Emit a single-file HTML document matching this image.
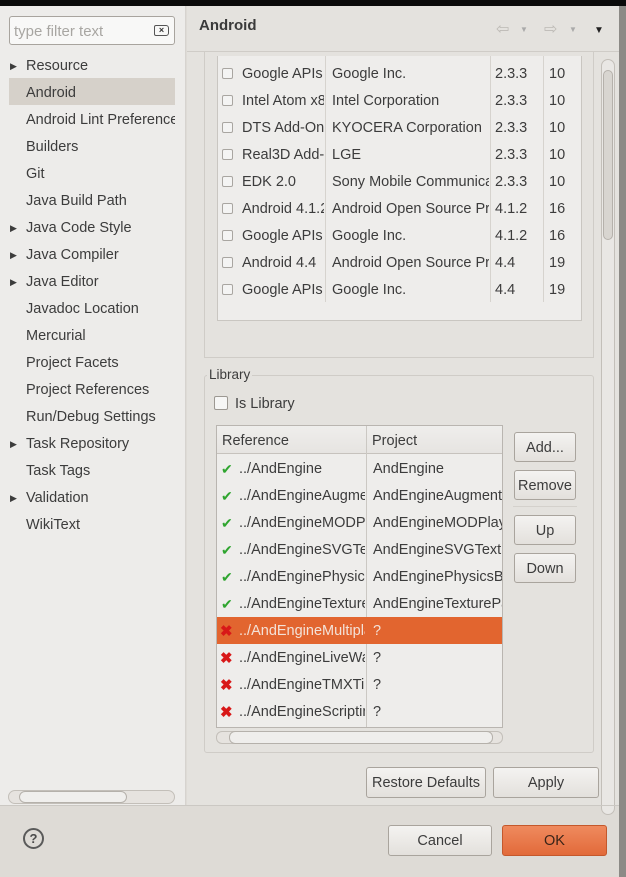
<!DOCTYPE html>
<html><head><style>
*{box-sizing:border-box;margin:0;padding:0}
body{width:626px;height:877px;position:relative;overflow:hidden;background:#dedbd6;font-family:"Liberation Sans",sans-serif;font-size:14.5px;color:#3c3c3c}
.a{position:absolute}
.t{position:absolute;white-space:nowrap;overflow:hidden}
.btn{position:absolute;border:1px solid #a9a49d;border-radius:3px;background:linear-gradient(#f4f3f1,#e3e0dc);text-align:center;font-size:14.5px;color:#3c3c3c}
.cb{position:absolute;width:11px;height:11px;border:1px solid #a9a6a1;border-radius:2px;background:#f4f4f3}
</style></head><body>
<div class="a" style="left:0;top:0;width:626px;height:6px;background:#0a0a0a"></div>
<div class="a" style="left:619px;top:6px;width:7px;height:871px;background:#8c8a86"></div>
<!-- left pane -->
<div class="a" style="left:0;top:6px;width:186px;height:799px;background:#edecea;border-right:1px solid #d6d3cf"></div>
<div class="a" style="left:9px;top:16px;width:166px;height:29px;border:1px solid #a8a49e;border-radius:3px;background:#f8f8f7"></div>
<div class="t" style="left:14px;top:23px;color:#a8a6a2;font-size:15px">type filter text</div>
<div class="a" style="left:154px;top:25px;width:15px;height:11px;border:1.5px solid #555;border-radius:2px 3px 3px 2px;font-size:9px;line-height:8px;text-align:center;font-weight:bold;color:#333">×</div>
<div class="a" style="left:9px;top:78px;width:166px;height:27px;background:#d6d1ca"></div>
<div class="a" style="left:0;top:53px;font-size:14.5px;line-height:27px">
<div style="position:relative;padding-left:26px">Resource<span class="a" style="left:10px;top:0;font-size:9px">▶</span></div>
<div style="padding-left:26px">Android</div>
<div style="padding-left:26px;width:175px;overflow:hidden;white-space:nowrap">Android Lint Preferences</div>
<div style="padding-left:26px">Builders</div>
<div style="padding-left:26px">Git</div>
<div style="padding-left:26px">Java Build Path</div>
<div style="position:relative;padding-left:26px">Java Code Style<span class="a" style="left:10px;top:0;font-size:9px">▶</span></div>
<div style="position:relative;padding-left:26px">Java Compiler<span class="a" style="left:10px;top:0;font-size:9px">▶</span></div>
<div style="position:relative;padding-left:26px">Java Editor<span class="a" style="left:10px;top:0;font-size:9px">▶</span></div>
<div style="padding-left:26px">Javadoc Location</div>
<div style="padding-left:26px">Mercurial</div>
<div style="padding-left:26px">Project Facets</div>
<div style="padding-left:26px">Project References</div>
<div style="padding-left:26px">Run/Debug Settings</div>
<div style="position:relative;padding-left:26px">Task Repository<span class="a" style="left:10px;top:0;font-size:9px">▶</span></div>
<div style="padding-left:26px">Task Tags</div>
<div style="position:relative;padding-left:26px">Validation<span class="a" style="left:10px;top:0;font-size:9px">▶</span></div>
<div style="padding-left:26px">WikiText</div>
</div>
<div class="a" style="left:8px;top:790px;width:167px;height:14px;border:1px solid #c3bfb9;border-radius:7px;background:#e6e3df"></div>
<div class="a" style="left:19px;top:791px;width:108px;height:12px;border:1px solid #b5b1ab;border-radius:6px;background:#f0efed"></div>
<!-- right pane -->
<div class="a" style="left:187px;top:6px;width:432px;height:799px;background:#e4e2de"></div>
<div class="t" style="left:199px;top:17px;font-weight:bold;font-size:15px;color:#3a3a3a">Android</div>
<div class="t" style="left:496px;top:19px;font-size:16px;color:#bdbab5">⇦</div>
<div class="t" style="left:520px;top:25px;font-size:8px;color:#aaa">▼</div>
<div class="t" style="left:544px;top:19px;font-size:16px;color:#bdbab5">⇨</div>
<div class="t" style="left:569px;top:25px;font-size:8px;color:#aaa">▼</div>
<div class="t" style="left:594px;top:25px;font-size:10px;color:#222">▼</div>
<div class="a" style="left:187px;top:51px;width:432px;height:1px;background:#cfccc7"></div>
<div class="a" style="left:204px;top:52px;width:390px;height:306px;border:1px solid #cfccc7;border-top:none"></div>
<div class="a" style="left:217px;top:56px;width:365px;height:265px;background:#eeedeb;border:1px solid #c9c6c1;border-top:none"></div>
<div class="a" style="left:325px;top:56px;width:1px;height:246px;background:#d6d3ce"></div>
<div class="a" style="left:490px;top:56px;width:1px;height:246px;background:#d6d3ce"></div>
<div class="a" style="left:543px;top:56px;width:1px;height:246px;background:#d6d3ce"></div>
<div class="a" style="left:0;top:61px;font-size:14.5px;line-height:27px">
<div style="position:relative;height:27px"><span class="cb" style="left:222px;top:7px"></span><span class="t" style="left:242px;width:82px">Google APIs</span><span class="t" style="left:332px;width:157px">Google Inc.</span><span class="t" style="left:495px">2.3.3</span><span class="t" style="left:549px">10</span></div>
<div style="position:relative;height:27px"><span class="cb" style="left:222px;top:7px"></span><span class="t" style="left:242px;width:82px">Intel Atom x86</span><span class="t" style="left:332px;width:157px">Intel Corporation</span><span class="t" style="left:495px">2.3.3</span><span class="t" style="left:549px">10</span></div>
<div style="position:relative;height:27px"><span class="cb" style="left:222px;top:7px"></span><span class="t" style="left:242px;width:82px">DTS Add-On</span><span class="t" style="left:332px;width:157px">KYOCERA Corporation</span><span class="t" style="left:495px">2.3.3</span><span class="t" style="left:549px">10</span></div>
<div style="position:relative;height:27px"><span class="cb" style="left:222px;top:7px"></span><span class="t" style="left:242px;width:82px">Real3D Add-On</span><span class="t" style="left:332px;width:157px">LGE</span><span class="t" style="left:495px">2.3.3</span><span class="t" style="left:549px">10</span></div>
<div style="position:relative;height:27px"><span class="cb" style="left:222px;top:7px"></span><span class="t" style="left:242px;width:82px">EDK 2.0</span><span class="t" style="left:332px;width:157px">Sony Mobile Communications</span><span class="t" style="left:495px">2.3.3</span><span class="t" style="left:549px">10</span></div>
<div style="position:relative;height:27px"><span class="cb" style="left:222px;top:7px"></span><span class="t" style="left:242px;width:82px">Android 4.1.2</span><span class="t" style="left:332px;width:157px">Android Open Source Project</span><span class="t" style="left:495px">4.1.2</span><span class="t" style="left:549px">16</span></div>
<div style="position:relative;height:27px"><span class="cb" style="left:222px;top:7px"></span><span class="t" style="left:242px;width:82px">Google APIs</span><span class="t" style="left:332px;width:157px">Google Inc.</span><span class="t" style="left:495px">4.1.2</span><span class="t" style="left:549px">16</span></div>
<div style="position:relative;height:27px"><span class="cb" style="left:222px;top:7px"></span><span class="t" style="left:242px;width:82px">Android 4.4</span><span class="t" style="left:332px;width:157px">Android Open Source Project</span><span class="t" style="left:495px">4.4</span><span class="t" style="left:549px">19</span></div>
<div style="position:relative;height:27px"><span class="cb" style="left:222px;top:7px"></span><span class="t" style="left:242px;width:82px">Google APIs</span><span class="t" style="left:332px;width:157px">Google Inc.</span><span class="t" style="left:495px">4.4</span><span class="t" style="left:549px">19</span></div>
</div>
<!-- vertical scrollbar -->
<div class="a" style="left:601px;top:59px;width:14px;height:756px;border:1px solid #c3bfb9;border-radius:7px;background:#e9e7e4"></div>
<div class="a" style="left:603px;top:70px;width:10px;height:170px;border:1px solid #b5b1ab;border-radius:5px;background:#d8d5d0"></div>
<!-- Library group -->
<div class="a" style="left:204px;top:375px;width:390px;height:378px;border:1px solid #cfccc7;border-radius:3px"></div>
<div class="t" style="left:207px;top:367px;background:#e4e2de;padding:0 2px;font-size:13.5px">Library</div>
<div class="a" style="left:214px;top:396px;width:14px;height:14px;border:1px solid #9c9892;border-radius:2px;background:#f6f6f5"></div>
<div class="t" style="left:235px;top:396px;font-size:14.5px">Is Library</div>
<div class="a" style="left:216px;top:425px;width:287px;height:303px;background:#eeedeb;border:1px solid #b9b5b0"></div>
<div class="a" style="left:217px;top:426px;width:285px;height:28px;background:linear-gradient(#efeeec,#e6e4e1);border-bottom:1px solid #c6c2bd"></div>
<div class="a" style="left:366px;top:426px;width:1px;height:301px;background:#cbc8c3"></div>
<div class="t" style="left:222px;top:433px">Reference</div>
<div class="t" style="left:372px;top:433px">Project</div>
<div class="a" style="left:217px;top:617px;width:285px;height:27px;background:#e2652f"></div>
<div class="a" style="left:0;top:456px;font-size:14.5px;line-height:27px">
<div style="position:relative;height:27px"><span class="t" style="left:221px;color:#2fa52f;font-size:14px">✔</span><span class="t" style="left:239px;width:126px">../AndEngine</span><span class="t" style="left:373px;width:129px">AndEngine</span></div>
<div style="position:relative;height:27px"><span class="t" style="left:221px;color:#2fa52f;font-size:14px">✔</span><span class="t" style="left:239px;width:126px">../AndEngineAugmentedReality</span><span class="t" style="left:373px;width:129px">AndEngineAugmentedReality</span></div>
<div style="position:relative;height:27px"><span class="t" style="left:221px;color:#2fa52f;font-size:14px">✔</span><span class="t" style="left:239px;width:126px">../AndEngineMODPlayer</span><span class="t" style="left:373px;width:129px">AndEngineMODPlayer</span></div>
<div style="position:relative;height:27px"><span class="t" style="left:221px;color:#2fa52f;font-size:14px">✔</span><span class="t" style="left:239px;width:126px">../AndEngineSVGTexture</span><span class="t" style="left:373px;width:129px">AndEngineSVGTexture</span></div>
<div style="position:relative;height:27px"><span class="t" style="left:221px;color:#2fa52f;font-size:14px">✔</span><span class="t" style="left:239px;width:126px">../AndEnginePhysicsBox2D</span><span class="t" style="left:373px;width:129px">AndEnginePhysicsBox2D</span></div>
<div style="position:relative;height:27px"><span class="t" style="left:221px;color:#2fa52f;font-size:14px">✔</span><span class="t" style="left:239px;width:126px">../AndEngineTexturePacker</span><span class="t" style="left:373px;width:129px">AndEngineTexturePacker</span></div>
<div style="position:relative;height:27px;color:#f3e2d8"><span class="t" style="left:220px;color:#d81818;font-weight:bold;font-size:15px">✖</span><span class="t" style="left:239px;width:126px">../AndEngineMultiplayer</span><span class="t" style="left:373px">?</span></div>
<div style="position:relative;height:27px"><span class="t" style="left:220px;color:#d81818;font-weight:bold;font-size:15px">✖</span><span class="t" style="left:239px;width:126px">../AndEngineLiveWallpaper</span><span class="t" style="left:373px">?</span></div>
<div style="position:relative;height:27px"><span class="t" style="left:220px;color:#d81818;font-weight:bold;font-size:15px">✖</span><span class="t" style="left:239px;width:126px">../AndEngineTMXTiledMap</span><span class="t" style="left:373px">?</span></div>
<div style="position:relative;height:27px"><span class="t" style="left:220px;color:#d81818;font-weight:bold;font-size:15px">✖</span><span class="t" style="left:239px;width:126px">../AndEngineScripting</span><span class="t" style="left:373px">?</span></div>
</div>
<div class="a" style="left:216px;top:731px;width:287px;height:13px;border:1px solid #c3bfb9;border-radius:6px;background:#e6e3df"></div>
<div class="a" style="left:229px;top:731px;width:264px;height:13px;border:1px solid #b5b1ab;border-radius:6px;background:#efeeec"></div>
<div class="btn" style="left:514px;top:432px;width:62px;height:30px;line-height:30px">Add...</div>
<div class="btn" style="left:514px;top:470px;width:62px;height:30px;line-height:30px">Remove</div>
<div class="a" style="left:513px;top:506px;width:64px;height:1px;background:#d4d1cc"></div>
<div class="btn" style="left:514px;top:515px;width:62px;height:30px;line-height:30px">Up</div>
<div class="btn" style="left:514px;top:553px;width:62px;height:30px;line-height:30px">Down</div>
<div class="btn" style="left:366px;top:767px;width:120px;height:31px;line-height:31px">Restore Defaults</div>
<div class="btn" style="left:493px;top:767px;width:106px;height:31px;line-height:31px">Apply</div>
<!-- bottom -->
<div class="a" style="left:0;top:805px;width:619px;height:1px;background:#cbc8c3"></div>
<div class="a" style="left:23px;top:828px;width:21px;height:21px;border:2px solid #5a5a5a;border-radius:50%;text-align:center;font-weight:bold;font-size:13px;line-height:17px;color:#4a4a4a">?</div>
<div class="btn" style="left:388px;top:825px;width:104px;height:31px;line-height:31px">Cancel</div>
<div class="btn" style="left:502px;top:825px;width:105px;height:31px;line-height:31px;background:linear-gradient(#ef8a5e,#e26a3a);border-color:#c4582c;color:#3a2418">OK</div>
</body></html>
